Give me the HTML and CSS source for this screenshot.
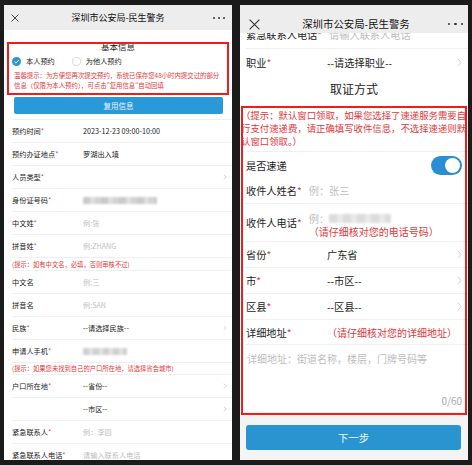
FILE: index.html
```html
<!DOCTYPE html>
<html lang="zh-CN">
<head>
<meta charset="utf-8">
<title>深圳市公安局-民生警务</title>
<link rel="stylesheet" href="styles.css">
</head>
<body>
<div class="stage">
  <section class="phone left">
    <header class="bar">
      <svg class="ico-x" width="8" height="8" viewBox="0 0 8 8"><path d="M0.5 0.5L7.5 7.5M7.5 0.5L0.5 7.5" stroke="#333" stroke-width="0.9" fill="none"/></svg>
      <div class="title">深圳市公安局-民生警务</div>
      <span class="dots"><i></i><i></i><i></i></span>
    </header>
    <div class="content">
      <h2 class="sec">基本信息</h2>
      <div class="radios">
        <span class="radio on"><svg width="9" height="9" viewBox="0 0 10 10"><circle cx="5" cy="5" r="5" fill="#2b95d6"/><path d="M2.6 5.1L4.4 6.8L7.5 3.5" stroke="#fff" stroke-width="1" fill="none"/></svg>本人预约</span>
        <span class="radio"><svg width="9" height="9" viewBox="0 0 10 10"><circle cx="5" cy="5" r="4.5" fill="#fff" stroke="#c9c9c9" stroke-width="0.8"/></svg>为他人预约</span>
      </div>
      <p class="warn">温馨提示：为方便您再次提交预约，系统已保存您48小时内提交过的部分信息（仅限为本人预约），可点击"复用信息"自动回填</p>
      <div class="btn-reuse">复用信息</div>
      <div class="list">
        <div class="row"><span class="lab">预约时间<b>*</b></span><span class="val">2023-12-23 09:00-10:00</span></div>
        <div class="row"><span class="lab">预约办证地点<b>*</b></span><span class="val">罗湖出入境</span></div>
        <div class="row"><span class="lab">人员类型<b>*</b></span><span class="val"></span><svg class="chev" width="4" height="6" viewBox="0 0 4 6"><path d="M0.7 0.6L3.2 3L0.7 5.4" stroke="#c4c4c4" stroke-width="0.7" fill="none"/></svg></div>
        <div class="row"><span class="lab">身份证号码<b>*</b></span><span class="val"><span class="blur blur-id"></span></span></div>
        <div class="row"><span class="lab">中文姓<b>*</b></span><span class="val ph">例:张</span></div>
        <div class="row"><span class="lab">拼音姓<b>*</b></span><span class="val ph">例:ZHANG</span></div>
        <div class="tip">(提示：如有中文名，必填，否则审核不过)</div>
        <div class="row"><span class="lab">中文名</span><span class="val ph">例:三</span></div>
        <div class="row"><span class="lab">拼音名</span><span class="val ph">例:SAN</span></div>
        <div class="row"><span class="lab">民族<b>*</b></span><span class="val">--请选择民族--</span><svg class="chev" width="4" height="6" viewBox="0 0 4 6"><path d="M0.7 0.6L3.2 3L0.7 5.4" stroke="#c4c4c4" stroke-width="0.7" fill="none"/></svg></div>
        <div class="row"><span class="lab">申请人手机<b>*</b></span><span class="val"><span class="blur blur-ph"></span></span></div>
        <div class="tip tip2">(提示：如果您未找到自己的户口所在地，请选择省会城市)</div>
        <div class="row"><span class="lab">户口所在地<b>*</b></span><span class="val">--省份--</span><svg class="chev" width="4" height="6" viewBox="0 0 4 6"><path d="M0.7 0.6L3.2 3L0.7 5.4" stroke="#c4c4c4" stroke-width="0.7" fill="none"/></svg></div>
        <div class="row"><span class="lab"></span><span class="val">--市区--</span><svg class="chev" width="4" height="6" viewBox="0 0 4 6"><path d="M0.7 0.6L3.2 3L0.7 5.4" stroke="#c4c4c4" stroke-width="0.7" fill="none"/></svg></div>
        <div class="row"><span class="lab">紧急联系人<b>*</b></span><span class="val ph">例：李四</span></div>
        <div class="row"><span class="lab">紧急联系人电话<b>*</b></span><span class="val ph">请输入联系人电话</span></div>
      </div>
    </div>
    <div class="mark mark-l"></div>
  </section>

  <section class="phone right">
    <header class="bar bar-r">
      <svg class="ico-x" width="11" height="11" viewBox="0 0 11 11"><path d="M0.6 0.6L10.4 10.4M10.4 0.6L0.6 10.4" stroke="#333" stroke-width="1.1" fill="none"/></svg>
      <div class="title">深圳市公安局-民生警务</div>
      <span class="dots"><i></i><i></i><i></i></span>
    </header>
    <div class="r-content">
      <div class="clip"><div class="r-row r-cut"><span class="r-lab">紧急联系人电话<b>*</b></span><span class="r-in ph">请输入联系人电话</span></div></div>
      <div class="r-row r-job"><span class="r-lab w81">职业<b>*</b></span><span class="r-val">--请选择职业--</span><svg class="r-chev" width="5" height="9" viewBox="0 0 5 9"><path d="M0.8 0.8L4 4.5L0.8 8.2" stroke="#c8c8c8" stroke-width="0.9" fill="none"/></svg></div>
      <h2 class="r-sec">取证方式</h2>
      <p class="r-hint">（提示：默认窗口领取，如果您选择了速递服务需要自行支付速递费，请正确填写收件信息，不选择速递则默认窗口领取。）</p>
      <div class="r-list">
        <div class="r-row r-toggle-row"><span class="r-lab">是否速递</span><span class="r-val"></span><span class="toggle"><i></i></span></div>
        <div class="r-row r-name"><span class="r-lab">收件人姓名<b>*</b></span><span class="r-in ph">例：张三</span></div>
        <div class="r-row r-tel">
          <span class="r-lab">收件人电话<b>*</b></span>
          <span class="r-stack">
            <span class="ph r-ex">例：<span class="blur blur-tel"></span></span>
            <span class="r-red">（请仔细核对您的电话号码）</span>
          </span>
        </div>
        <div class="r-row"><span class="r-lab w81">省份<b>*</b></span><span class="r-val">广东省</span><svg class="r-chev" width="5" height="9" viewBox="0 0 5 9"><path d="M0.8 0.8L4 4.5L0.8 8.2" stroke="#c8c8c8" stroke-width="0.9" fill="none"/></svg></div>
        <div class="r-row"><span class="r-lab w81">市<b>*</b></span><span class="r-val">--市区--</span><svg class="r-chev" width="5" height="9" viewBox="0 0 5 9"><path d="M0.8 0.8L4 4.5L0.8 8.2" stroke="#c8c8c8" stroke-width="0.9" fill="none"/></svg></div>
        <div class="r-row"><span class="r-lab w81">区县<b>*</b></span><span class="r-val">--区县--</span><svg class="r-chev" width="5" height="9" viewBox="0 0 5 9"><path d="M0.8 0.8L4 4.5L0.8 8.2" stroke="#c8c8c8" stroke-width="0.9" fill="none"/></svg></div>
        <div class="r-row r-addr"><span class="r-lab w81">详细地址<b>*</b></span><span class="r-red">（请仔细核对您的详细地址）</span></div>
      </div>
      <div class="textarea">
        <div class="ph">详细地址：街道名称，楼层，门牌号码等</div>
        <div class="count">0/60</div>
      </div>
      <div class="footer"><div class="btn-next">下一步</div></div>
    </div>
    <div class="mark mark-r"></div>
  </section>
</div>
</body>
</html>
```

FILE: styles.css
```css
* { box-sizing: border-box; }
html, body { margin: 0; padding: 0; }
body {
  width: 472px;
  height: 465px;
  overflow: hidden;
  background: #1b1b1b;
  font-family: "Noto Sans CJK SC", "Noto Sans", sans-serif;
  color: #222;
}
.stage {
  display: flex;
  gap: 8px;
  padding: 5px 4px;
}
.phone {
  position: relative;
  width: 228px;
  height: 455px;
  background: #fff;
  overflow: hidden;
  display: flex;
  flex-direction: column;
}
.bar {
  flex: none;
  height: 25px;
  background: #ededed;
  display: grid;
  grid-template-columns: 20px 1fr 20px;
  align-items: center;
  padding: 0 7px;
  position: relative;
  z-index: 2;
}
.title {
  text-align: center;
  font-size: 9px;
  color: #111;
  line-height: 12px;
}
.dots {
  display: flex;
  gap: 3px;
  justify-content: flex-end;
}
.dots i {
  display: block;
  width: 2px;
  height: 2px;
  border-radius: 50%;
  background: #333;
}
.mark {
  position: absolute;
  border: 2px solid #f01e1a;
  pointer-events: none;
  z-index: 3;
}
.mark-l { left: 3px; top: 37px; width: 222px; height: 53px; }
.mark-r { left: 1px; top: 101px; width: 226px; height: 309px; }

/* left */
.content { flex: 1; }
.sec {
  margin: 10px 0 0;
  font-size: 8.5px;
  font-weight: normal;
  line-height: 12px;
  text-align: center;
  color: #222;
}
.radios {
  margin-top: 4px;
  height: 10px;
  display: flex;
  align-items: center;
  padding-left: 8px;
  gap: 17px;
  font-size: 7.2px;
}
.radio { display: flex; align-items: center; gap: 5px; }
.radio svg { display: block; }
.warn {
  margin: 5px 0 0 10px;
  width: 208px;
  font-size: 6.4px;
  line-height: 10px;
  color: #e0373b;
}
.btn-reuse {
  margin: 6px 9px 0 10px;
  height: 17px;
  border-radius: 2px;
  background: #2a99d7;
  color: #e9f4fb;
  font-size: 7.5px;
  display: flex;
  align-items: center;
  justify-content: center;
}
.list {
  margin: 5px 0 0 8px;
  border-top: 1px solid #efefef;
}
.row {
  height: 23px;
  border-bottom: 1px solid #efefef;
  display: flex;
  align-items: center;
  font-size: 7.2px;
}
.lab { width: 71px; flex: none; color: #222; white-space: nowrap; }
.lab b, .r-lab b { color: #e5383b; font-weight: normal; }
.val { flex: 1; color: #222; display: flex; align-items: center; }
.ph { color: #bdbdbd; }
.chev { margin-right: 5px; display: block; }
.tip {
  height: 13px;
  border-bottom: 1px solid #efefef;
  display: flex;
  align-items: center;
  font-size: 6.3px;
  color: #e0373b;
}
.tip2 { height: 12px; }
.blur {
  display: inline-block;
  filter: blur(0.8px);
  border-radius: 1px;
}
.blur-id {
  width: 74px;
  height: 7px;
  background: repeating-linear-gradient(90deg, #c9c9c9 0 7px, #dedede 7px 12px, #d2d2d2 12px 18px);
}
.blur-ph {
  width: 44px;
  height: 7px;
  background: repeating-linear-gradient(90deg, #cfcfcf 0 6px, #e2e2e2 6px 10px);
}

/* right */
.bar-r {
  height: 28px;
  padding: 10px 5px 0 9px;
  grid-template-columns: 26px 1fr 26px;
}
.bar-r .title { font-size: 10.4px; line-height: 14px; }
.bar-r .dots { gap: 4px; }
.bar-r .dots i { width: 2.5px; height: 2.5px; }
.r-content {
  flex: 1;
  display: flex;
  flex-direction: column;
}
.clip {
  height: 16px;
  overflow: hidden;
  margin-left: 6px;
  border-bottom: 1px solid #efefef;
}
.r-row {
  display: flex;
  align-items: center;
  font-size: 10.2px;
  margin-left: 6px;
  border-bottom: 1px solid #efefef;
  height: 26px;
}
.r-cut { margin: -4px 0 0 0; border: 0; height: 12px; line-height: 12px; }
.r-job { height: 27px; border-bottom: 0; }
.r-lab { flex: none; color: #222; white-space: nowrap; }
.w81 { width: 81px; }
.r-in { margin-left: 7px; }
.r-val { flex: 1; color: #222; }
.r-chev { margin-right: 6px; display: block; }
.r-sec {
  margin: 5px 0 0;
  font-size: 12px;
  font-weight: normal;
  line-height: 16px;
  text-align: center;
  color: #222;
}
.r-hint {
  margin: 12px 0 0;
  padding: 0 1px;
  font-size: 9.4px;
  line-height: 13px;
  color: #e0373b;
}
.r-list {
  margin-top: 3px;
  border-top: 1px solid #efefef;
  margin-left: 6px;
}
.r-list .r-row { margin-left: 0; }
.r-toggle-row { border-bottom: 0; }
.toggle {
  width: 31px;
  height: 19px;
  border-radius: 10px;
  background: #2a8fd2;
  margin-right: 6px;
  display: flex;
  align-items: center;
  justify-content: flex-end;
  padding-right: 2px;
}
.toggle i {
  display: block;
  width: 15px;
  height: 15px;
  border-radius: 50%;
  background: #fff;
}
.r-tel { height: 38px; }
.r-stack {
  margin-left: 7px;
  display: flex;
  flex-direction: column;
  margin-top: 6px;
}
.r-ex { display: flex; align-items: center; height: 13px; line-height: 13px; }
.r-stack .r-red { height: 14px; line-height: 14px; }
.r-red { color: #e0373b; font-size: 10px; }
.blur-tel {
  width: 62px;
  height: 9px;
  background: repeating-linear-gradient(90deg, #dcdcdc 0 8px, #e9e9e9 8px 14px);
}
.r-addr { height: 25px; }
.textarea {
  height: 67px;
  padding: 8px 6px 0 7px;
  font-size: 10px;
  line-height: 12px;
  display: flex;
  flex-direction: column;
  justify-content: space-between;
}
.count {
  text-align: right;
  color: #a9a9a9;
  padding-bottom: 5px;
}
.footer {
  flex: 1;
  background: #f4f4f4;
  padding: 13px 7px 0 6px;
}
.btn-next {
  height: 25px;
  border-radius: 3px;
  background: #2a94d1;
  color: #eef6fb;
  font-size: 10.5px;
  display: flex;
  align-items: center;
  justify-content: center;
}
```
